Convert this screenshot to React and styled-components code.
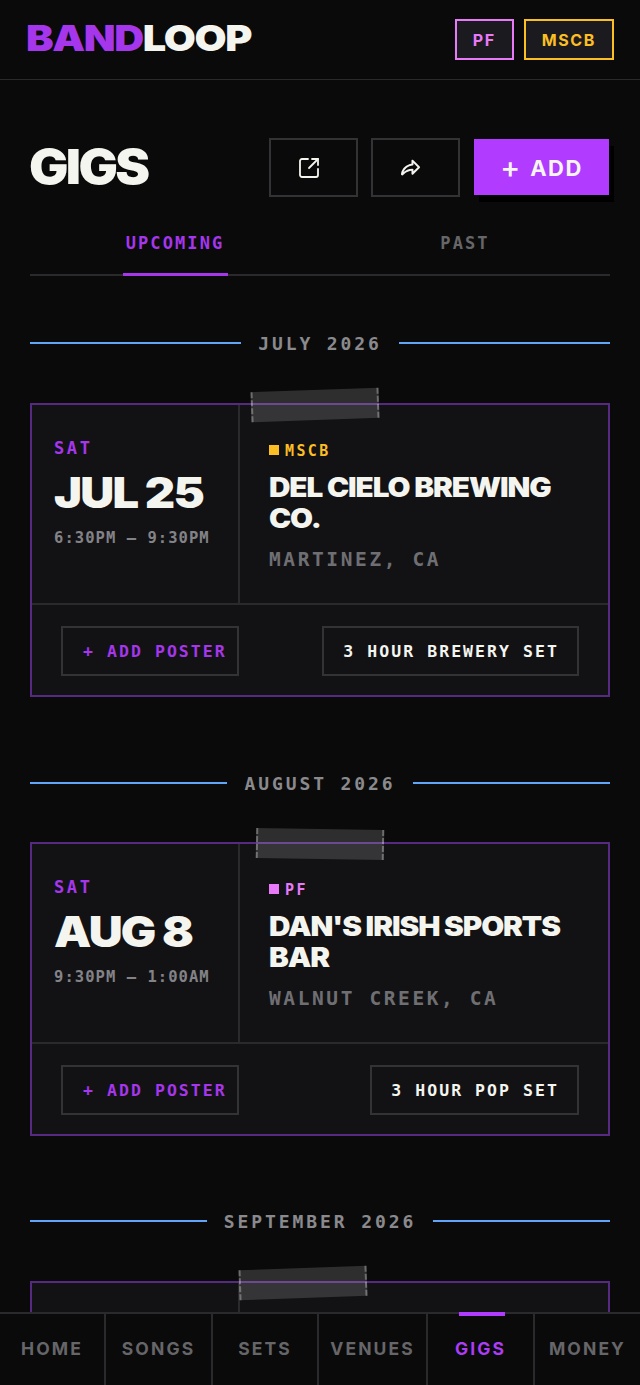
import React from "react";
import styled, { createGlobalStyle } from "styled-components";
import { SquareArrowOutUpRight } from "lucide-react";
import { PiShareFatBold } from "react-icons/pi";

const PURPLE = "#a636ec";
const BRIGHT = "#b13bff";
const DISPLAY = '"Inter", "Liberation Sans", sans-serif';
const MONO = '"DejaVu Sans Mono", "Liberation Mono", monospace';

const GlobalStyle = createGlobalStyle`
  html, body {
    margin: 0;
    padding: 0;
    background: #0a0a0b;
  }
  * {
    box-sizing: border-box;
  }
`;

const Shell = styled.div`
  height: 100vh;
  display: flex;
  flex-direction: column;
  overflow: hidden;
  background: #0a0a0b;
  color: #f5f5f0;
`;

const Header = styled.header`
  flex: none;
  height: 80px;
  display: flex;
  align-items: center;
  justify-content: space-between;
  padding: 0 26px 0 26px;
  border-bottom: 1px solid #2a2a2d;
`;

// the reference's display face is an extended grotesque, so stretch Inter to its widths
const Logo = styled.div`
  font-family: ${DISPLAY};
  font-weight: 900;
  font-size: 36px;
  letter-spacing: -1.2px;
  line-height: 1;
  margin-top: -4px;
  transform: scaleX(1.15);
  transform-origin: left center;
  & span {
    color: ${PURPLE};
  }
`;

const Badges = styled.div`
  display: flex;
  gap: 10px;
`;

const Badge = styled.div`
  height: 41px;
  display: flex;
  align-items: center;
  padding: 0 16px;
  background: #1a1a1f;
  border: 2px solid ${(p) => p.$color};
  color: ${(p) => p.$color};
  font-family: ${DISPLAY};
  font-weight: 700;
  font-size: 16px;
  letter-spacing: 1.6px;
`;

const Main = styled.main`
  flex: 1;
  min-height: 0;
  overflow: hidden;
  padding: 58px 30px 0;
`;

const TitleRow = styled.div`
  display: flex;
  align-items: center;
  justify-content: space-between;
  height: 58px;
`;

const Title = styled.h1`
  margin: 0 0 0 -1px;
  font-family: ${DISPLAY};
  font-weight: 900;
  font-size: 48px;
  letter-spacing: -2.4px;
  line-height: 1;
  transform: scaleX(1.09);
  transform-origin: left center;
`;

const Actions = styled.div`
  display: flex;
  align-items: center;
  gap: 13px;
`;

const IconButton = styled.button`
  width: 89px;
  height: 59px;
  display: flex;
  align-items: center;
  justify-content: center;
  padding: 2px 10px 0 0;
  background: transparent;
  border: 2px solid #333336;
  color: #f5f5f0;
`;

const AddButton = styled.button`
  width: 135px;
  height: 56px;
  margin: 0 1px 0 1px;
  padding: 2px 0 0;
  display: flex;
  align-items: center;
  justify-content: center;
  gap: 10px;
  background: ${BRIGHT};
  border: none;
  box-shadow: 5px 7px 0 #000;
  color: #f5f5f0;
  font-family: ${DISPLAY};
  font-weight: 700;
  font-size: 22px;
  letter-spacing: 1.5px;
`;

const Plus = styled.span`
  font-size: 30px;
  font-weight: 500;
  line-height: 1;
  margin-top: -3px;
  letter-spacing: 0;
`;

const Tabs = styled.div`
  display: grid;
  grid-template-columns: 1fr 1fr;
  height: 52px;
  margin-top: 28px;
  border-bottom: 2px solid #2a2a2d;
`;

const Tab = styled.div`
  justify-self: center;
  display: flex;
  justify-content: center;
  width: 105px;
  height: 52px;
  padding-top: 9px;
  font-family: ${MONO};
  font-weight: 700;
  font-size: 17px;
  letter-spacing: 2.1px;
  line-height: 20px;
  color: ${(p) => (p.$active ? PURPLE : "#666669")};
  border-bottom: 3px solid ${(p) => (p.$active ? PURPLE : "transparent")};
`;

const MonthRow = styled.div`
  display: flex;
  align-items: center;
  gap: 17px;
  height: 20px;
  margin: ${(p) => p.$top}px 0 ${(p) => p.$bottom}px;
  &::before,
  &::after {
    content: "";
    flex: 1;
    height: 2px;
    background: #60a5fa;
  }
`;

const MonthLabel = styled.div`
  font-family: ${MONO};
  font-weight: 700;
  font-size: 18px;
  letter-spacing: 2.9px;
  color: #8a8a8e;
`;

const Card = styled.article`
  position: relative;
  border: 2px solid #552a80;
  background: #121215;
`;

const Tape = styled.div`
  position: absolute;
  top: -15px;
  left: ${(p) => p.$left}px;
  width: 128px;
  height: 30px;
  background: rgba(255, 255, 255, 0.15);
  border-left: 2px dashed rgba(255, 255, 255, 0.3);
  border-right: 2px dashed rgba(255, 255, 255, 0.3);
  transform: rotate(${(p) => p.$tilt}deg);
`;

const CardTop = styled.div`
  display: grid;
  grid-template-columns: 208px 1fr;
  height: 200px;
  border-bottom: 2px solid #2a2a2d;
`;

const DateCol = styled.div`
  padding: 33px 22px 0;
  border-right: 2px solid #2a2a2d;
`;

const Day = styled.div`
  font-family: ${MONO};
  font-weight: 700;
  font-size: 17px;
  letter-spacing: 2.6px;
  line-height: 20px;
  color: ${PURPLE};
`;

const DateText = styled.div`
  margin-top: 11px;
  font-family: ${DISPLAY};
  font-weight: 900;
  font-size: 42px;
  letter-spacing: -1.6px;
  line-height: 48px;
  white-space: nowrap;
  transform: scaleX(1.12);
  transform-origin: left center;
`;

const Time = styled.div`
  margin-top: 11px;
  font-family: ${MONO};
  font-weight: 700;
  font-size: 15.5px;
  letter-spacing: 1.05px;
  line-height: 20px;
  white-space: nowrap;
  color: #838387;
`;

const InfoCol = styled.div`
  padding: 36px 28px 0 29px;
`;

const Act = styled.div`
  display: flex;
  align-items: center;
  gap: 6px;
  height: 20px;
  font-family: ${MONO};
  font-weight: 700;
  font-size: 15px;
  letter-spacing: 2.4px;
  color: ${(p) => p.$color};
  &::before {
    content: "";
    width: 10px;
    height: 10px;
    margin-top: -2px;
    background: ${(p) => p.$color};
  }
`;

const Venue = styled.h2`
  margin: 11px 0 0;
  max-width: 280px;
  font-family: ${DISPLAY};
  font-weight: 900;
  font-size: 27px;
  letter-spacing: -1px;
  line-height: 31px;
  transform: scaleX(1.1);
  transform-origin: left center;
`;

const City = styled.div`
  margin-top: 14px;
  font-family: ${MONO};
  font-weight: 700;
  font-size: 19.5px;
  letter-spacing: 2.6px;
  line-height: 24px;
  color: #6f6f73;
`;

const CardFoot = styled.div`
  display: flex;
  align-items: center;
  justify-content: space-between;
  height: 90px;
  padding: 1px 29px 0;
`;

const FootTag = styled.div`
  height: 50px;
  display: flex;
  align-items: center;
  padding: ${(p) => (p.$poster ? "2px 10px 0 20px" : "2px 18px 0 19px")};
  border: 2px solid #333336;
  font-family: ${MONO};
  font-weight: 700;
  font-size: 16.5px;
  letter-spacing: 2.05px;
  color: ${(p) => (p.$poster ? PURPLE : "#f5f5f0")};
`;

const BottomNav = styled.nav`
  flex: none;
  height: 73px;
  display: flex;
  background: #0a0a0b;
  border-top: 2px solid #2a2a2d;
`;

const NavItem = styled.div`
  position: relative;
  width: ${(p) => p.$width}px;
  display: flex;
  align-items: center;
  justify-content: center;
  padding-bottom: 2px;
  border-right: ${(p) => (p.$last ? "none" : "2px solid #2a2a2d")};
  font-family: ${DISPLAY};
  font-weight: 700;
  font-size: 17.5px;
  letter-spacing: 2.1px;
  color: ${(p) => (p.$active ? "#ad3cf5" : "#666669")};
  &::before {
    content: "";
    display: ${(p) => (p.$active ? "block" : "none")};
    position: absolute;
    top: -2px;
    left: 31px;
    width: 46px;
    height: 4px;
    background: ${BRIGHT};
  }
`;

const months = [
  {
    label: "JULY 2026",
    top: 57,
    bottom: 50,
    tapeLeft: 219,
    tilt: -2,
    gig: {
      day: "SAT",
      date: "JUL 25",
      time: "6:30PM – 9:30PM",
      act: "MSCB",
      color: "#fbbf24",
      venue: "DEL CIELO BREWING CO.",
      city: "MARTINEZ, CA",
      note: "3 HOUR BREWERY SET",
    },
  },
  {
    label: "AUGUST 2026",
    top: 76,
    bottom: 49,
    tapeLeft: 224,
    tilt: 1,
    gig: {
      day: "SAT",
      date: "AUG 8",
      time: "9:30PM – 1:00AM",
      act: "PF",
      color: "#e879f9",
      venue: "DAN'S IRISH SPORTS BAR",
      city: "WALNUT CREEK, CA",
      note: "3 HOUR POP SET",
    },
  },
  // only the top edge of this card shows above the nav
  { label: "SEPTEMBER 2026", top: 75, bottom: 50, tapeLeft: 207, tilt: -2 },
];

const navItems = [
  { label: "HOME", width: 106 },
  { label: "SONGS", width: 107 },
  { label: "SETS", width: 106 },
  { label: "VENUES", width: 109 },
  { label: "GIGS", width: 107, active: true },
  { label: "MONEY", width: 105, last: true },
];

export default function App() {
  return (
    <Shell>
      <GlobalStyle />
      <Header>
        <Logo>
          <span>BAND</span>LOOP
        </Logo>
        <Badges>
          <Badge $color="#e879f9">PF</Badge>
          <Badge $color="#fbbf24">MSCB</Badge>
        </Badges>
      </Header>
      <Main>
        <TitleRow>
          <Title>GIGS</Title>
          <Actions>
            <IconButton>
              <SquareArrowOutUpRight size={24} strokeWidth={1.8} />
            </IconButton>
            <IconButton>
              <PiShareFatBold size={21} />
            </IconButton>
            <AddButton>
              <Plus>+</Plus>
              ADD
            </AddButton>
          </Actions>
        </TitleRow>
        <Tabs>
          <Tab $active>UPCOMING</Tab>
          <Tab>PAST</Tab>
        </Tabs>
        {months.map(({ label, top, bottom, tapeLeft, tilt, gig }) => (
          <section key={label}>
            <MonthRow $top={top} $bottom={bottom}>
              <MonthLabel>{label}</MonthLabel>
            </MonthRow>
            <Card>
              <Tape $left={tapeLeft} $tilt={tilt} />
              <CardTop>
                <DateCol>
                  {gig && (
                    <>
                      <Day>{gig.day}</Day>
                      <DateText>{gig.date}</DateText>
                      <Time>{gig.time}</Time>
                    </>
                  )}
                </DateCol>
                <InfoCol>
                  {gig && (
                    <>
                      <Act $color={gig.color}>{gig.act}</Act>
                      <Venue>{gig.venue}</Venue>
                      <City>{gig.city}</City>
                    </>
                  )}
                </InfoCol>
              </CardTop>
              {gig && (
                <CardFoot>
                  <FootTag $poster>+ ADD POSTER</FootTag>
                  <FootTag>{gig.note}</FootTag>
                </CardFoot>
              )}
            </Card>
          </section>
        ))}
      </Main>
      <BottomNav>
        {navItems.map((item) => (
          <NavItem
            key={item.label}
            $width={item.width}
            $active={item.active}
            $last={item.last}
          >
            {item.label}
          </NavItem>
        ))}
      </BottomNav>
    </Shell>
  );
}
